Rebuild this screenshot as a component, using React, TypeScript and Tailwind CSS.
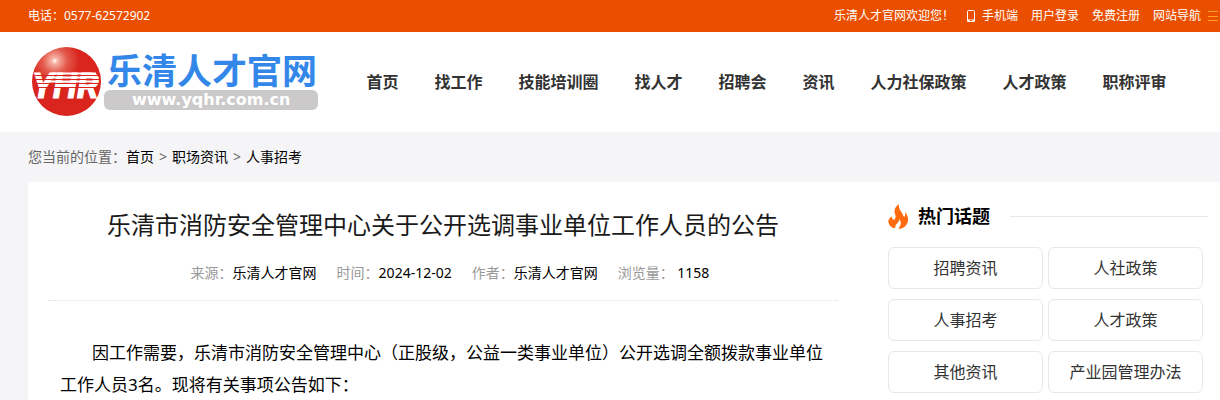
import type { ReactNode } from "react";

const navItems = [
  "首页",
  "找工作",
  "技能培训圈",
  "找人才",
  "招聘会",
  "资讯",
  "人力社保政策",
  "人才政策",
  "职称评审",
];

const topics = [
  "招聘资讯",
  "人社政策",
  "人事招考",
  "人才政策",
  "其他资讯",
  "产业园管理办法",
];

const stripes = [75, 79, 83, 87];

function TopBar() {
  return (
    <div className="bg-[#ea4f00] text-xs text-white">
      <div className="flex h-8 items-center justify-between pl-7 pr-0.5">
        <span>电话：0577-62572902</span>
        <div className="flex items-center gap-[13px]">
          <span>乐清人才官网欢迎您！</span>
          <a href="#" className="flex items-center gap-[7px]">
            <svg width="8" height="12" viewBox="0 0 8 12" fill="none">
              <rect x="0.5" y="0.5" width="7" height="11" rx="1" stroke="#fff" />
              <path d="M0 10.5h8" stroke="#fff" strokeWidth="2" />
              <path d="M3 10.5h2" stroke="#ea4f00" />
            </svg>
            手机端
          </a>
          <a href="#">用户登录</a>
          <a href="#">免费注册</a>
          <a href="#" className="flex items-center gap-[7px]">
            网站导航
            <svg width="10" height="10" viewBox="0 0 10 10" stroke="#ffa21a">
              <path d="M0 0.5h10M0 5.5h10M0 9.5h10" />
            </svg>
          </a>
        </div>
      </div>
    </div>
  );
}

function Logo() {
  return (
    <a href="#" className="flex items-center">
      <svg width="76" height="80" viewBox="28 42 76 80">
        <defs>
          <radialGradient id="ball" cx="0.33" cy="0.2" r="0.36">
            <stop offset="0" stopColor="#fff" />
            <stop offset="0.12" stopColor="#f6b3a6" />
            <stop offset="0.5" stopColor="#e2594b" />
            <stop offset="1" stopColor="#d9251d" />
          </radialGradient>
        </defs>
        <circle cx="66.5" cy="81.5" r="34.5" fill="url(#ball)" />
        <text
          x="32"
          y="98"
          fill="#fff"
          stroke="#fff"
          fontFamily="Roboto, Liberation Sans, sans-serif"
          fontSize="35"
          fontWeight="bold"
          fontStyle="italic"
        >
          YHR
        </text>
        <path d="M52 73.5h44M51 77.5h44M50 81.5h44" stroke="#fff" strokeWidth="2" />
        {stripes.map((y) => (
          <path key={y} d={`M35 ${y + 0.5}h65`} stroke="#d9251d" />
        ))}
      </svg>
      <span className="flex flex-col pb-0.5">
        <span className="pl-[3px] text-[35px] font-bold leading-[38px] text-[#3387e8]">
          乐清人才官网
        </span>
        <span className="rounded-md bg-[#cbc9ca] px-7 text-center font-['DejaVu_Sans'] text-base font-bold leading-5 text-white">
          www.yqhr.com.cn
        </span>
      </span>
    </a>
  );
}

function Header() {
  return (
    <header className="flex h-[100px] items-center gap-[30px] bg-white pl-7">
      <Logo />
      <nav className="flex">
        {navItems.map((item) => (
          <a
            key={item}
            href="#"
            className="whitespace-nowrap px-[18px] text-base font-bold text-[#333]"
          >
            {item}
          </a>
        ))}
      </nav>
    </header>
  );
}

function Breadcrumb() {
  return (
    <div className="flex h-[50px] items-center pl-7 text-sm text-[#666]">
      <span>您当前的位置：</span>
      <nav className="flex gap-[5px]">
        <a href="#" className="text-black">首页</a>
        <span>&gt;</span>
        <a href="#" className="text-black">职场资讯</a>
        <span>&gt;</span>
        <a href="#" className="text-black">人事招考</a>
      </nav>
    </div>
  );
}

function Meta({ label, children }: { label: string; children: ReactNode }) {
  return (
    <span className="text-[#999]">
      {label}：<span className="text-black">{children}</span>
    </span>
  );
}

function Article() {
  return (
    <article className="min-w-0 flex-[790]">
      <h1 className="text-center text-2xl leading-[46px] text-[#1a1a1a]">
        乐清市消防安全管理中心关于公开选调事业单位工作人员的公告
      </h1>
      <div className="mt-[15px] flex justify-center gap-5 border-b border-dotted border-[#ddd] pb-[17px] pl-3.5 text-sm">
        <Meta label="来源">乐清人才官网</Meta>
        <Meta label="时间">2024-12-02</Meta>
        <Meta label="作者">乐清人才官网</Meta>
        <Meta label="浏览量">&nbsp;1158</Meta>
      </div>
      <p className="mt-9 pl-3 indent-8 text-[17px] leading-8 text-black">
        因工作需要，乐清市消防安全管理中心（正股级，公益一类事业单位）公开选调全额拨款事业单位工作人员3名。现将有关事项公告如下：
      </p>
    </article>
  );
}

function HotTopics() {
  return (
    <aside className="min-w-0 flex-[320]">
      <div className="flex items-center">
        <svg width="20" height="25" viewBox="0 0 20 25" fill="#ff6a0d">
          <path d="M11 0C7 3 5.5 6.5 7 10c.8 2 1 4-.5 5.5C5 16 4 15 4 12.5 1 14 0 16.5 .5 18.5 1.2 22 4 24 7.5 24 6.5 21.5 8.5 20 10 18.5c1-1 1.3-2 1-3.5 2 2 2.3 4.5 1 7L10.5 25c5-.5 9-3.5 9.5-8.5.3-3.5-1-6-3-8.5.3 2 .3 3.5-.5 5C14.5 12 15 9.5 13 7.5 11.5 5.5 10.5 3 11 0z" />
        </svg>
        <h2 className="ml-2.5 text-lg font-bold leading-7 text-black">热门话题</h2>
        <span className="ml-5 h-px flex-1 bg-[#e8e8e8]" />
      </div>
      <div className="mr-[5px] mt-[17px] grid grid-cols-2 gap-x-[5px] gap-y-2.5">
        {topics.map((topic) => (
          <a
            key={topic}
            href="#"
            className="rounded-md border border-[#e8e8e8] text-center text-base leading-10 text-[#333]"
          >
            {topic}
          </a>
        ))}
      </div>
    </aside>
  );
}

export default function App() {
  return (
    <div className="min-h-screen bg-[#f5f5f7] font-['Noto_Sans','Noto_Sans_CJK_SC',sans-serif]">
      <TopBar />
      <Header />
      <Breadcrumb />
      <main className="ml-7 flex gap-[50px] bg-white pb-2 pl-5 pr-3 pt-5">
        <Article />
        <HotTopics />
      </main>
    </div>
  );
}
